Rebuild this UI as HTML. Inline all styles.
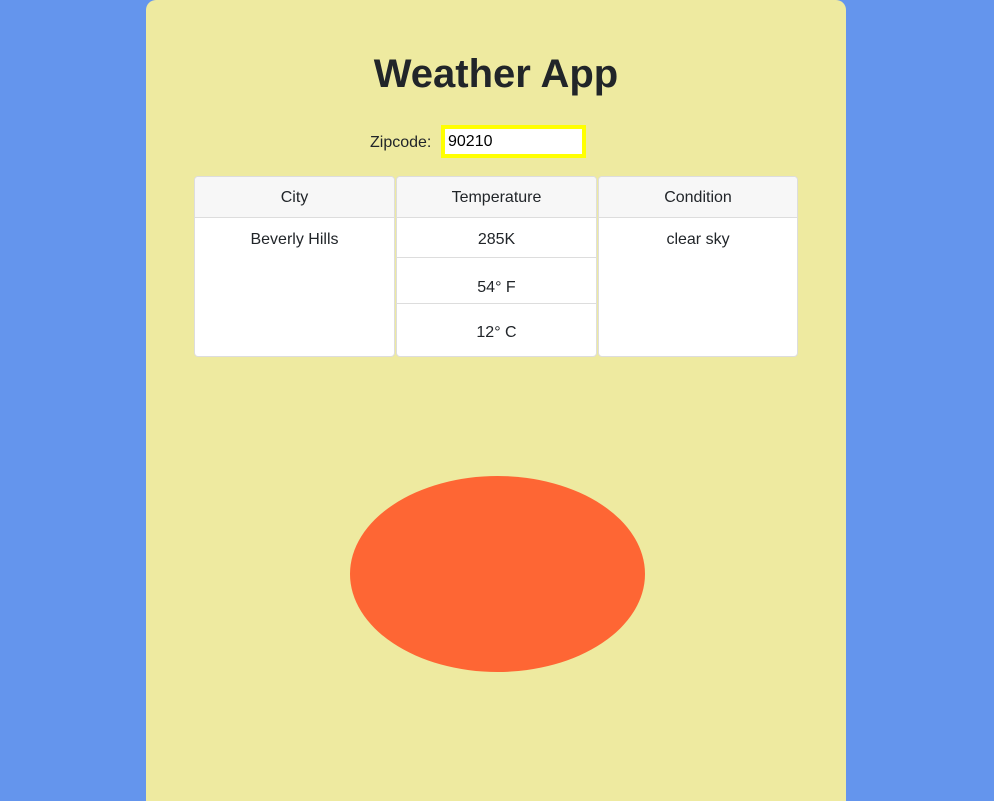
<!DOCTYPE html>
<html><head><style>
body{margin:0;background:#6495ED;font-family:"Liberation Sans",sans-serif;width:994px;height:801px;overflow:hidden;position:relative}
.c{position:absolute;left:146px;top:0;width:700px;height:801px;background:#EEEAA0;border-radius:10px 10px 0 0}
h1{position:absolute;left:146px;width:700px;top:52px;margin:0;text-align:center;font-size:40px;font-weight:bold;color:#212529}
.z{position:absolute;left:370px;top:134px;font-size:16px;color:#212529}
.in{position:absolute;left:441px;top:125px;width:134px;height:25px;border:4px solid #ffff00;background:#fff;font-size:16px;color:#000;line-height:26px;padding-left:3px;box-sizing:content-box}
.card{position:absolute;top:176px;height:181px;background:#fff;border:1px solid #ddd;border-radius:4px;box-sizing:border-box;text-align:center;font-size:16px;color:#212529;overflow:hidden}
.hd{height:40px;line-height:42px;background:#f7f7f7;border-bottom:1px solid #ddd}
.r{border-bottom:1px solid #ddd}
.e{position:absolute;left:350px;top:476px;width:295px;height:196px;border-radius:50%;background:#FE6634}
</style></head><body>
<div class="c"></div>
<h1>Weather App</h1>
<div class="z">Zipcode:</div>
<div class="in">90210</div>
<div class="card" style="left:194px;width:201px"><div class="hd">City</div><div style="padding-top:13px">Beverly Hills</div></div>
<div class="card" style="left:396px;width:201px"><div class="hd">Temperature</div>
<div class="r" style="height:39px;line-height:44px">285K</div>
<div class="r" style="height:45px;line-height:60px">54° F</div>
<div style="line-height:58px">12° C</div></div>
<div class="card" style="left:598px;width:200px"><div class="hd">Condition</div><div style="padding-top:13px">clear sky</div></div>
<div class="e"></div>
</body></html>
